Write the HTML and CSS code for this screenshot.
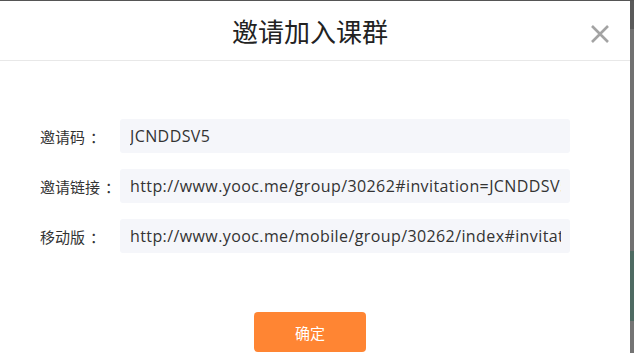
FILE: index.html
```html
<!DOCTYPE html>
<html lang="zh-CN">
<head>
  <meta charset="UTF-8" />
  <meta name="viewport" content="width=device-width, initial-scale=1.0" />
  <title>邀请加入课群</title>
  <link rel="stylesheet" href="styles.css">
</head>
<body>

  <div class="page">
    <div class="modal">
      <header class="modal-head">
        <h2>邀请加入课群</h2>
        <span class="close">
          <svg width="20" height="20" viewBox="0 0 20 20">
            <path d="M2 2 L18 18 M18 2 L2 18" stroke="#a3a3a3" stroke-width="2.6" />
          </svg>
        </span>
      </header>

      <div class="modal-body">
        <div class="row">
          <label>邀请码<span class="colon">：</span></label>
          <div class="field">JCNDDSV5</div>
        </div>
        <div class="row">
          <label>邀请链接<span class="colon">：</span></label>
          <div class="field">http://www.yooc.me/group/30262#invitation=JCNDDSV5</div>
        </div>
        <div class="row">
          <label>移动版<span class="colon">：</span></label>
          <div class="field">http://www.yooc.me/mobile/group/30262/index#invitation=JCNDDSV5</div>
        </div>
      </div>

      <div class="modal-foot">
        <button class="btn">确定</button>
      </div>
    </div>

    <div class="backdrop">
      <span class="bd-a"></span>
      <span class="bd-b"></span>
      <span class="bd-c"></span>
      <span class="bd-d"></span>
    </div>
  </div>

</body>
</html>
```

FILE: styles.css
```css
/* Reset */
* { margin: 0; padding: 0; box-sizing: border-box; }
html, body { height: 100%; }
body { font-family: "Noto Sans CJK SC", "Noto Sans", sans-serif; background: #6f6f6f; overflow: hidden; }

.page { display: flex; height: 353px; border-top: 1px solid #555; }

/* Modal */
.modal { width: 630px; background: #fff; display: flex; flex-direction: column; }

.modal-head {
  height: 60px;
  border-bottom: 1px solid #e8e8e8;
  display: flex;
  align-items: center;
  justify-content: center;
  position: relative;
}
.modal-head h2 { font-size: 26px; font-weight: normal; color: #222; margin-left: -10px; }
.close { position: absolute; right: 20px; top: 23px; width: 20px; height: 20px; }

/* Rows */
.modal-body { padding: 58px 60px 0 40px; display: flex; flex-direction: column; gap: 16px; }
.row { display: flex; align-items: center; }
.row label { width: 80px; font-size: 15px; color: #333; white-space: nowrap; }
.colon { margin-left: 5px; }
.field {
  flex: 1;
  height: 34px;
  line-height: 34px;
  border: 0 solid transparent;
  border-width: 0 9px 0 10px;
  background: #f5f6fa;
  border-radius: 3px;
  font-family: "Open Sans", "Noto Sans", sans-serif;
  font-size: 16px;
  letter-spacing: 0.4px;
  color: #333;
  white-space: nowrap;
  overflow: hidden;
}

/* Footer */
.modal-foot { display: flex; justify-content: center; padding-top: 59px; padding-right: 10px; }
.btn {
  width: 112px;
  height: 40px;
  border: none;
  border-radius: 4px;
  background: #ff8533;
  color: #fff;
  font-family: inherit;
  font-size: 15px;
}

/* Backdrop strip */
.backdrop { flex: 1; display: flex; flex-direction: column; background: #707070; }
.backdrop span { display: block; }
.bd-a { height: 28px; background: #5a5a5a; }
.bd-b { height: 222px; background: #717171; }
.bd-c { height: 70px; background: #4e6b62; }
.bd-d { flex: 1; background: #747474; }
```
